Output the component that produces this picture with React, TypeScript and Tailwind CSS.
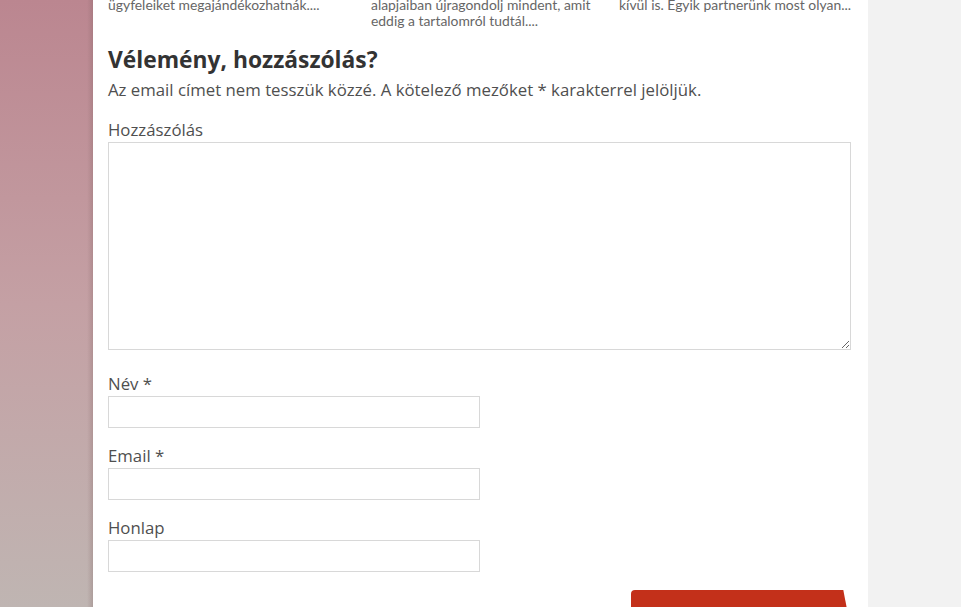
import React from "react";

export default function App() {
  const lato = { fontFamily: "Lato, 'Noto Sans', sans-serif" };
  const open = { fontFamily: "'Open Sans', 'Noto Sans', sans-serif" };
  return (
    <div className="flex h-[607px] w-[961px] overflow-hidden" style={open}>
      <div className="relative w-[93px] shrink-0 bg-gradient-to-b from-[#bb8690] via-[#c4a0a4] to-[#bfb5b2]">
        <div className="absolute right-0 top-0 h-full w-[6px] bg-gradient-to-r from-transparent to-[rgba(120,90,90,0.25)]" />
      </div>
      <div className="w-[775px] shrink-0 bg-white px-[15px]">
        <div className="-mt-[3px] grid grid-cols-[263px_248px_1fr] text-[13.9px] leading-[16px] text-[#666]" style={lato}>
          <div>ügyfeleiket megajándékozhatnák....</div>
          <div>
            alapjaiban újragondolj mindent, amit
            <br />
            eddig a tartalomról tudtál....
          </div>
          <div>kívül is. Egyik partnerünk most olyan...</div>
        </div>
        <h3 className="mt-[17px] text-[22.8px] font-bold leading-[28px] text-[#333]">
          Vélemény, hozzászólás?
        </h3>
        <p className="mt-[4px] text-[16.8px] leading-[24px] text-[#4f4f4f]">
          Az email címet nem tesszük közzé. A kötelező mezőket * karakterrel jelöljük.
        </p>
        <label className="mt-[16px] block text-[16.8px] leading-[24px] text-[#4f4f4f]">Hozzászólás</label>
        <textarea className="block h-[208px] w-[743px] border border-[#d8d8d8] bg-white outline-none" />
        <label className="mt-[22px] block text-[16.8px] leading-[24px] text-[#4f4f4f]">Név *</label>
        <input className="block h-[32px] w-[372px] border border-[#d8d8d8] bg-white outline-none" />
        <label className="mt-[16px] block text-[16.8px] leading-[24px] text-[#4f4f4f]">Email *</label>
        <input className="block h-[32px] w-[372px] border border-[#d8d8d8] bg-white outline-none" />
        <label className="mt-[16px] block text-[16.8px] leading-[24px] text-[#4f4f4f]">Honlap</label>
        <input className="block h-[32px] w-[372px] border border-[#d8d8d8] bg-white outline-none" />
        <div className="mt-[18px] flex justify-end pr-[2px]">
          <div className="h-[40px] w-[220px] rounded-tl-[4px] bg-[#c3301a] [clip-path:polygon(0_0,96.5%_0,100%_100%,0_100%)]" />
        </div>
      </div>
      <div className="flex-1 bg-[#f2f2f2]" />
    </div>
  );
}
